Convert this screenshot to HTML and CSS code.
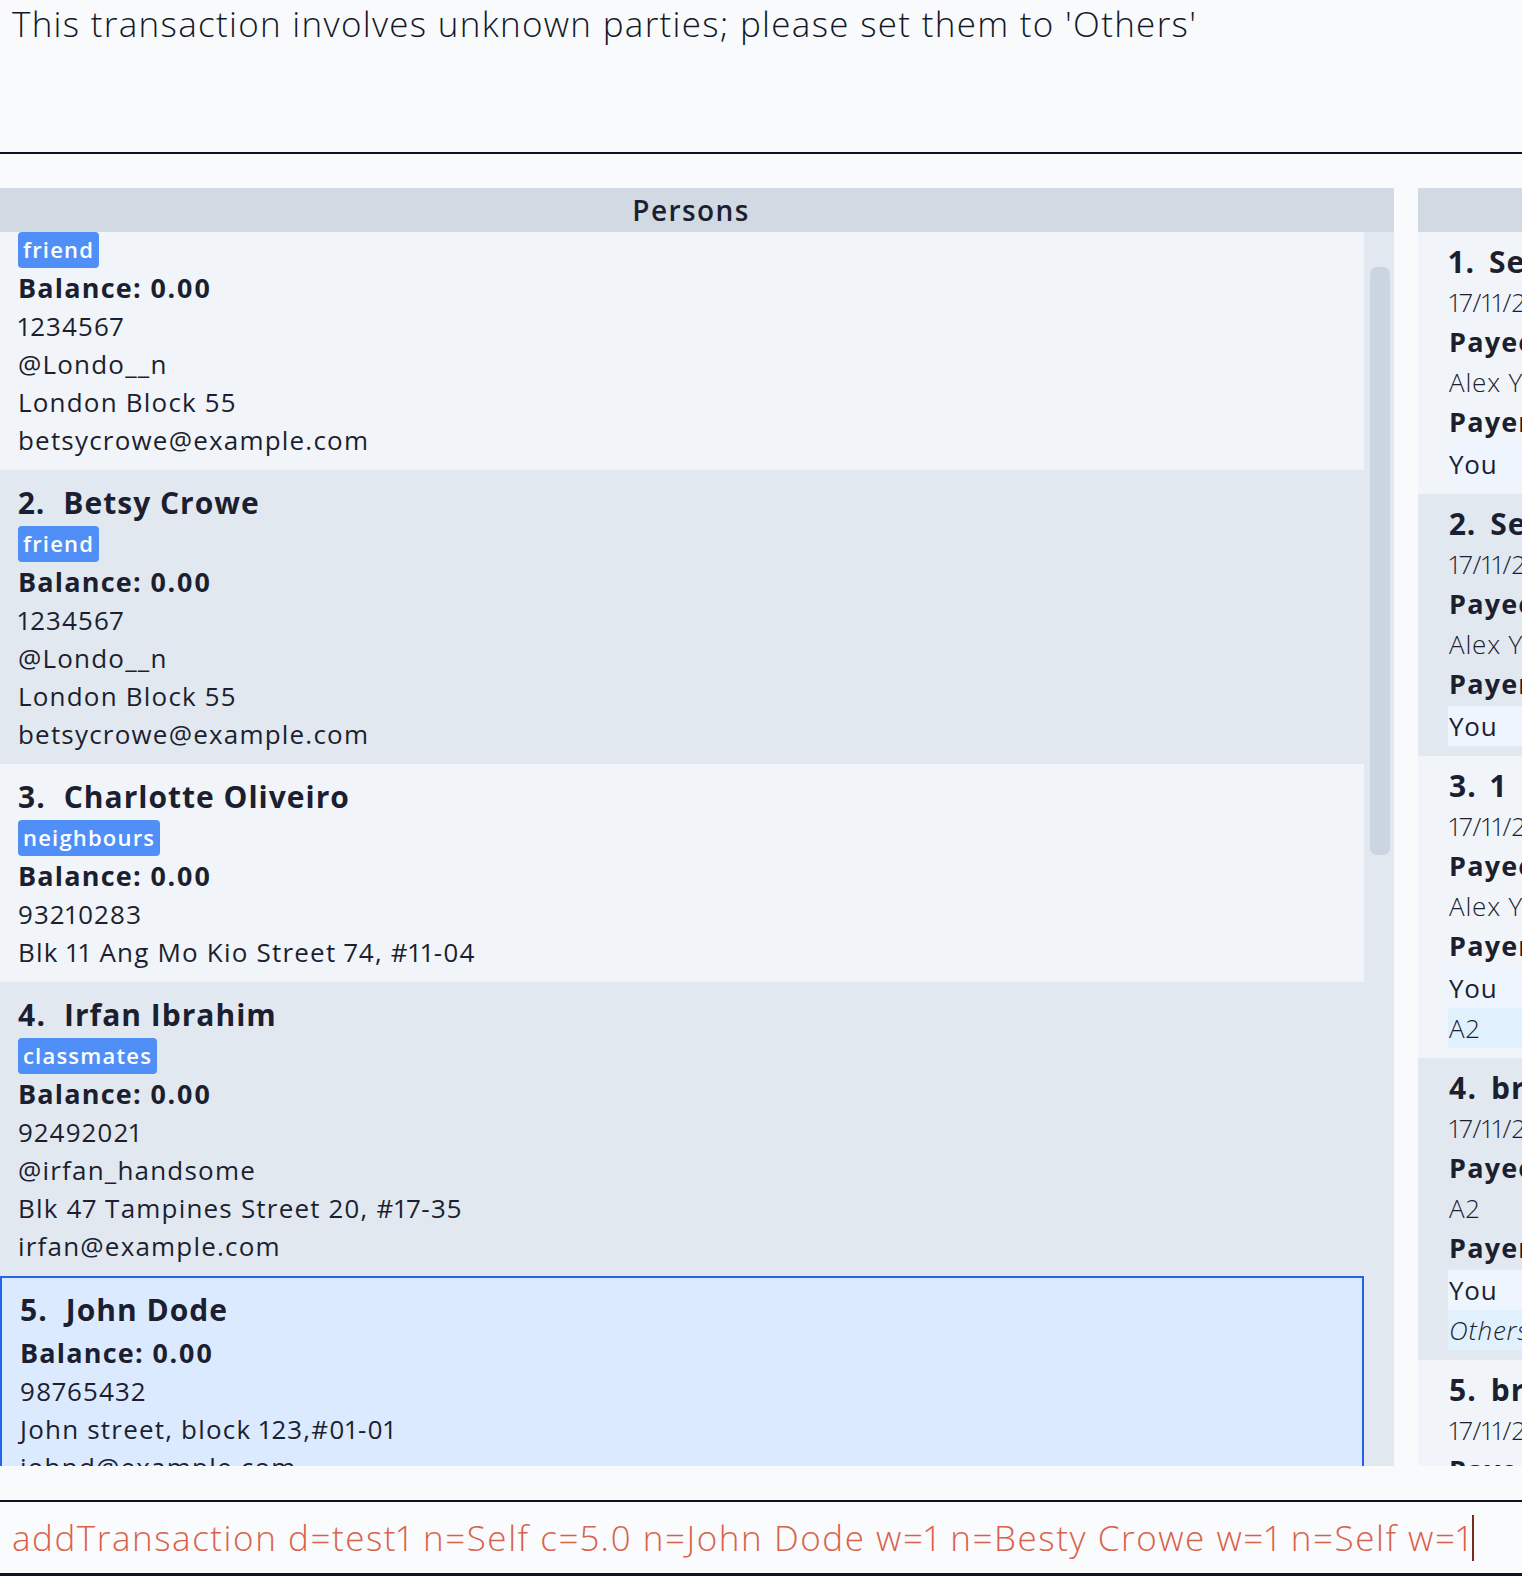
FILE: index.html
```html
<!DOCTYPE html>
<html>
<head>
<meta charset="utf-8">
<link rel="stylesheet" href="styles.css">
</head>
<body>
<div class="app">
  <div class="result">This transaction involves unknown parties; please set them to 'Others'</div>
  <div class="main">
    <section class="panel persons">
      <div class="panel-head">Persons</div>
      <div class="panel-body">
        <div class="plist">
          <div class="pcard odd scrolled">
            <div class="pname"><span class="idx">1.</span><span>Alex Yeoh</span></div>
            <div class="tags"><span class="tag">friend</span></div>
            <div class="bal">Balance: 0.00</div>
            <div class="line">1234567</div>
            <div class="line">@Londo__n</div>
            <div class="line">London Block 55</div>
            <div class="line">betsycrowe@example.com</div>
          </div>
          <div class="pcard even">
            <div class="pname"><span class="idx">2.</span><span>Betsy Crowe</span></div>
            <div class="tags"><span class="tag">friend</span></div>
            <div class="bal">Balance: 0.00</div>
            <div class="line">1234567</div>
            <div class="line">@Londo__n</div>
            <div class="line">London Block 55</div>
            <div class="line">betsycrowe@example.com</div>
          </div>
          <div class="pcard odd">
            <div class="pname"><span class="idx">3.</span><span>Charlotte Oliveiro</span></div>
            <div class="tags"><span class="tag">neighbours</span></div>
            <div class="bal">Balance: 0.00</div>
            <div class="line">93210283</div>
            <div class="line">Blk 11 Ang Mo Kio Street 74, #11-04</div>
          </div>
          <div class="pcard even">
            <div class="pname"><span class="idx">4.</span><span>Irfan Ibrahim</span></div>
            <div class="tags"><span class="tag">classmates</span></div>
            <div class="bal">Balance: 0.00</div>
            <div class="line">92492021</div>
            <div class="line">@irfan_handsome</div>
            <div class="line">Blk 47 Tampines Street 20, #17-35</div>
            <div class="line">irfan@example.com</div>
          </div>
          <div class="pcard selected">
            <div class="pname"><span class="idx">5.</span><span>John Dode</span></div>
            <div class="tags empty"></div>
            <div class="bal">Balance: 0.00</div>
            <div class="line">98765432</div>
            <div class="line">John street, block 123,#01-01</div>
            <div class="line">johnd@example.com</div>
          </div>
        </div>
        <div class="track"><div class="thumb"></div></div>
      </div>
    </section>
    <section class="panel txns">
      <div class="panel-head">Transactions</div>
      <div class="panel-body tbody">
        <div class="tcard odd">
          <div class="tname"><span class="idx">1.</span><span>Settle lunch</span></div>
          <div class="tline date">17/11/2023</div>
          <div class="tlabel">Payee:</div>
          <div class="tline">Alex Yeoh</div>
          <div class="tlabel">Payers:</div>
          <div class="payer self">You</div>
        </div>
        <div class="tcard even">
          <div class="tname"><span class="idx">2.</span><span>Settle dinner</span></div>
          <div class="tline date">17/11/2023</div>
          <div class="tlabel">Payee:</div>
          <div class="tline">Alex Yeoh</div>
          <div class="tlabel">Payers:</div>
          <div class="payer self">You</div>
        </div>
        <div class="tcard odd">
          <div class="tname"><span class="idx">3.</span><span>1</span></div>
          <div class="tline date">17/11/2023</div>
          <div class="tlabel">Payee:</div>
          <div class="tline">Alex Yeoh</div>
          <div class="tlabel">Payers:</div>
          <div class="payer self">You</div>
          <div class="payer other">A2</div>
        </div>
        <div class="tcard even">
          <div class="tname"><span class="idx">4.</span><span>breakfast</span></div>
          <div class="tline date">17/11/2023</div>
          <div class="tlabel">Payee:</div>
          <div class="tline">A2</div>
          <div class="tlabel">Payers:</div>
          <div class="payer self">You</div>
          <div class="payer other unknown">Others</div>
        </div>
        <div class="tcard odd">
          <div class="tname"><span class="idx">5.</span><span>breakfast</span></div>
          <div class="tline date">17/11/2023</div>
          <div class="tlabel">Payee:</div>
          <div class="tline">A2</div>
        </div>
      </div>
    </section>
  </div>
  <div class="command">
    <span class="cmd-text">addTransaction d=test1 n=Self c=5.0 n=John Dode w=1 n=Besty Crowe w=1 n=Self w=1</span><span class="caret"></span>
  </div>
</div>
</body>
</html>
```

FILE: styles.css
```css
* { box-sizing: border-box; }

html, body {
  margin: 0;
  padding: 0;
}

body {
  width: 1522px;
  height: 1576px;
  overflow: hidden;
  background: #f8fafc;
  color: #1c1f30;
  font-family: "Open Sans", "Noto Sans", sans-serif;
  font-variant-numeric: proportional-nums;
}

.app {
  width: 1522px;
  height: 1576px;
  display: flex;
  flex-direction: column;
  overflow: hidden;
}

.result {
  height: 154px;
  flex-shrink: 0;
  padding: 0 12px;
  font-size: 35px;
  font-weight: 300;
  line-height: 48px;
  letter-spacing: 1.3px;
  white-space: nowrap;
  border-bottom: 2px solid #0e1322;
  color: #131828;
}

.main {
  flex-shrink: 0;
  height: 1312px;
  padding-top: 34px;
  display: flex;
  gap: 24px;
  overflow: hidden;
}

.panel {
  flex-shrink: 0;
  background: #e2e8f0;
  display: flex;
  flex-direction: column;
}

.persons { width: 1394px; }
.txns { width: 1000px; }

.panel-head {
  height: 44px;
  flex-shrink: 0;
  background: #d1d9e3;
  text-align: center;
  font-size: 28px;
  font-weight: 600;
  line-height: 44px;
  letter-spacing: 1.4px;
  padding-right: 12px;
}

.panel-body {
  flex: 1;
  display: flex;
  overflow: hidden;
}

.plist {
  width: 1364px;
  flex-shrink: 0;
  display: flex;
  flex-direction: column;
}

.track {
  flex: 1;
  padding: 35px 4px 0 6px;
}

.thumb {
  width: 20px;
  height: 588px;
  background: #cbd5e1;
  border-radius: 7px;
}

.pcard {
  flex-shrink: 0;
  padding: 13px 18px 11px;
}

.pcard.scrolled { margin-top: -56px; }

.odd { background: #f1f5f9; }
.even { background: #e2e8f0; }

.pcard.selected {
  background: #dbeafe;
  border: 2px solid #2563eb;
  padding: 12px 18px 11px;
}

.pname {
  font-size: 30px;
  font-weight: 700;
  line-height: 40px;
  letter-spacing: 1px;
  display: flex;
}

.idx { margin-right: 18px; }

.tags {
  display: flex;
  gap: 8px;
  margin: 3px 0 1px;
}

.tag {
  height: 36px;
  padding: 0 5px;
  background: #4f8ff7;
  color: #ffffff;
  font-size: 22px;
  font-weight: 600;
  line-height: 35px;
  border-radius: 4px;
  letter-spacing: 1.2px;
}

.bal {
  font-size: 27px;
  font-weight: 700;
  line-height: 38px;
  letter-spacing: 1.2px;
}

.line {
  font-size: 26px;
  font-weight: 400;
  line-height: 38px;
  letter-spacing: 1.2px;
}

.tbody {
  flex-direction: column;
}

.tcard {
  flex-shrink: 0;
  padding: 10px 0 10px 30px;
}

.tname {
  font-size: 30px;
  font-weight: 700;
  line-height: 40px;
  padding-left: 1px;
  letter-spacing: 1px;
  display: flex;
}

.tname .idx { margin-right: 14px; }

.tline {
  font-size: 26px;
  font-weight: 300;
  line-height: 40px;
  padding-left: 1px;
  letter-spacing: 0.8px;
}

.tline.date { letter-spacing: 0.2px; }

.tlabel {
  font-size: 27px;
  font-weight: 700;
  line-height: 40px;
  padding-left: 1px;
  letter-spacing: 1.2px;
}

.payer {
  font-size: 26px;
  line-height: 40px;
  padding-left: 1px;
  letter-spacing: 0.8px;
}

.payer.self {
  margin-top: 2px;
  background: #eef5fe;
  font-weight: 400;
}

.payer.other {
  background: #e0f0fc;
  font-weight: 300;
}

.payer.unknown { font-style: italic; }

.command {
  flex-shrink: 0;
  margin-top: 34px;
  height: 76px;
  border-top: 2px solid #0e1322;
  border-bottom: 3px solid #0e1322;
  background: #fafbfc;
  padding: 0 12px;
  display: flex;
  align-items: center;
  white-space: nowrap;
  font-size: 35px;
  font-weight: 300;
  color: #d8624b;
  letter-spacing: 1.55px;
}

.caret {
  display: inline-block;
  width: 2px;
  height: 46px;
  background: #7a2a1c;
  margin-left: 0;
}
```
